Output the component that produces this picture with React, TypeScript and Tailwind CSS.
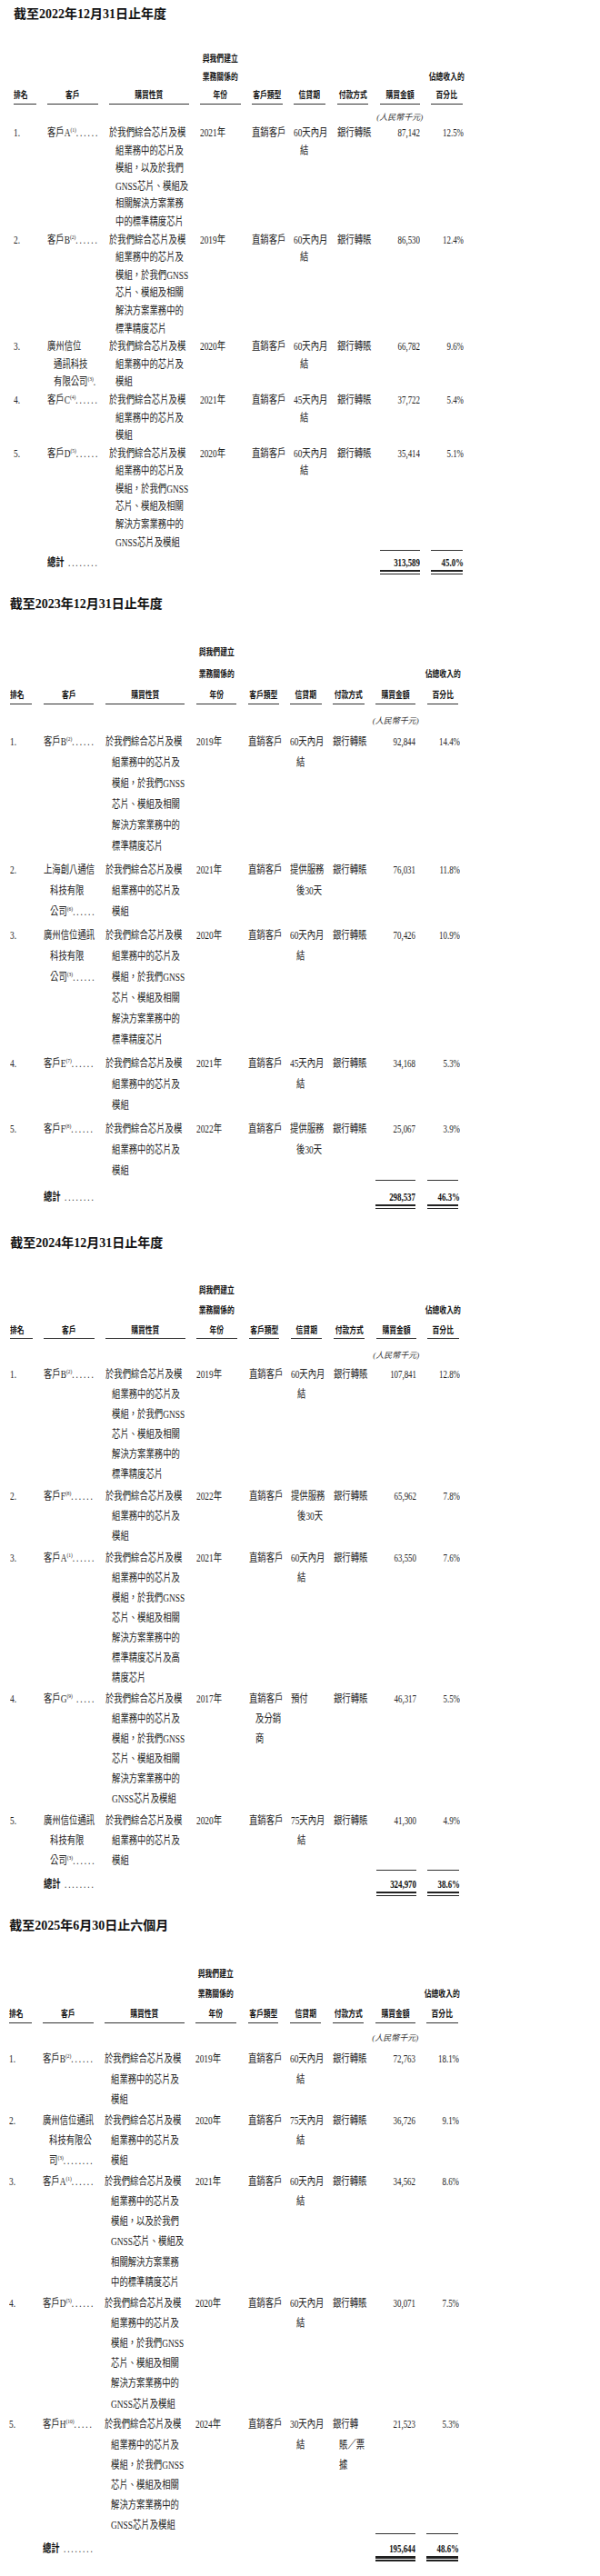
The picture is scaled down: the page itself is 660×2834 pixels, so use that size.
import React from "react";

type Cust = { lines: string[]; note: string; dots: string };
type Row = {
  rank: string;
  cust: Cust;
  nature: string[];
  year: string;
  type: string[];
  credit: string[];
  pay: string[];
  amt: string;
  pct: string;
};

type Cfg = {
  title: string;
  rows: Row[];
  amt: string;
  pct: string;
  wrap: string;
  headerMt: string;
  hLead: string;
  hUnder: string;
  unitsMt: string;
  rowsMt: string;
  lead: string;
  rowGap: string;
  totalMt: string;
  totalPt: string;
};

const GRID =
  "grid grid-cols-[24.5px_55.5px_87.5px_44.5px_33.5px_34.5px_34.5px_44px_34.5px] gap-x-[12.6px]";
const SL = "origin-left scale-x-[0.78]";
const SR = "origin-right scale-x-[0.74]";

const N_A = ["於我們綜合芯片及模", "組業務中的芯片及", "模組，以及於我們", "GNSS芯片、模組及", "相關解決方案業務", "中的標準精度芯片"];
const N_B = ["於我們綜合芯片及模", "組業務中的芯片及", "模組，於我們GNSS", "芯片、模組及相關", "解決方案業務中的", "標準精度芯片"];
const N_S = ["於我們綜合芯片及模", "組業務中的芯片及", "模組"];
const N_D = ["於我們綜合芯片及模", "組業務中的芯片及", "模組，於我們GNSS", "芯片、模組及相關", "解決方案業務中的", "GNSS芯片及模組"];
const N_A24 = ["於我們綜合芯片及模", "組業務中的芯片及", "模組，於我們GNSS", "芯片、模組及相關", "解決方案業務中的", "標準精度芯片及高", "精度芯片"];

const DC = ["直銷客戶"];
const C60 = ["60天內月", "結"];
const C45 = ["45天內月", "結"];
const C75 = ["75天內月", "結"];
const C30 = ["30天內月", "結"];
const CSV = ["提供服務", "後30天"];
const BANK = ["銀行轉賬"];

const cust = (lines: string[], note: string, dots = "......"): Cust => ({ lines, note, dots });

const S1: Row[] = [
  { rank: "1.", cust: cust(["客戶A"], "1"), nature: N_A, year: "2021年", type: DC, credit: C60, pay: BANK, amt: "87,142", pct: "12.5%" },
  { rank: "2.", cust: cust(["客戶B"], "2"), nature: N_B, year: "2019年", type: DC, credit: C60, pay: BANK, amt: "86,530", pct: "12.4%" },
  { rank: "3.", cust: cust(["廣州信位", "通訊科技", "有限公司"], "3", "."), nature: N_S, year: "2020年", type: DC, credit: C60, pay: BANK, amt: "66,782", pct: "9.6%" },
  { rank: "4.", cust: cust(["客戶C"], "4"), nature: N_S, year: "2021年", type: DC, credit: C45, pay: BANK, amt: "37,722", pct: "5.4%" },
  { rank: "5.", cust: cust(["客戶D"], "5"), nature: N_D, year: "2020年", type: DC, credit: C60, pay: BANK, amt: "35,414", pct: "5.1%" },
];

const S2: Row[] = [
  { rank: "1.", cust: cust(["客戶B"], "2"), nature: N_B, year: "2019年", type: DC, credit: C60, pay: BANK, amt: "92,844", pct: "14.4%" },
  { rank: "2.", cust: cust(["上海創八通信", "科技有限", "公司"], "6"), nature: N_S, year: "2021年", type: DC, credit: CSV, pay: BANK, amt: "76,031", pct: "11.8%" },
  { rank: "3.", cust: cust(["廣州信位通訊", "科技有限", "公司"], "3"), nature: N_B, year: "2020年", type: DC, credit: C60, pay: BANK, amt: "70,426", pct: "10.9%" },
  { rank: "4.", cust: cust(["客戶E"], "7"), nature: N_S, year: "2021年", type: DC, credit: C45, pay: BANK, amt: "34,168", pct: "5.3%" },
  { rank: "5.", cust: cust(["客戶F"], "8"), nature: N_S, year: "2022年", type: DC, credit: CSV, pay: BANK, amt: "25,067", pct: "3.9%" },
];

const S3: Row[] = [
  { rank: "1.", cust: cust(["客戶B"], "2"), nature: N_B, year: "2019年", type: DC, credit: C60, pay: BANK, amt: "107,841", pct: "12.8%" },
  { rank: "2.", cust: cust(["客戶F"], "8"), nature: N_S, year: "2022年", type: DC, credit: CSV, pay: BANK, amt: "65,962", pct: "7.8%" },
  { rank: "3.", cust: cust(["客戶A"], "1"), nature: N_A24, year: "2021年", type: DC, credit: C60, pay: BANK, amt: "63,550", pct: "7.6%" },
  { rank: "4.", cust: cust(["客戶G"], "9", " ....."), nature: N_D, year: "2017年", type: ["直銷客戶", "及分銷", "商"], credit: ["預付"], pay: BANK, amt: "46,317", pct: "5.5%" },
  { rank: "5.", cust: cust(["廣州信位通訊", "科技有限", "公司"], "3"), nature: N_S, year: "2020年", type: DC, credit: C75, pay: BANK, amt: "41,300", pct: "4.9%" },
];

const S4: Row[] = [
  { rank: "1.", cust: cust(["客戶B"], "2"), nature: N_S, year: "2019年", type: DC, credit: C60, pay: BANK, amt: "72,763", pct: "18.1%" },
  { rank: "2.", cust: cust(["廣州信位通訊", "科技有限公", "司"], "3", "........"), nature: N_S, year: "2020年", type: DC, credit: C75, pay: BANK, amt: "36,726", pct: "9.1%" },
  { rank: "3.", cust: cust(["客戶A"], "1"), nature: N_A, year: "2021年", type: DC, credit: C60, pay: BANK, amt: "34,562", pct: "8.6%" },
  { rank: "4.", cust: cust(["客戶D"], "5"), nature: N_D, year: "2020年", type: DC, credit: C60, pay: BANK, amt: "30,071", pct: "7.5%" },
  { rank: "5.", cust: cust(["客戶H"], "10", "....."), nature: N_D, year: "2024年", type: DC, credit: C30, pay: ["銀行轉", "賬／票", "據"], amt: "21,523", pct: "5.3%" },
];

const HEADERS: string[][] = [
  ["排名"],
  ["客戶"],
  ["購買性質"],
  ["與我們建立", "業務關係的", "年份"],
  ["客戶類型"],
  ["信貸期"],
  ["付款方式"],
  ["購買金額"],
  ["佔總收入的", "百分比"],
];

function Lines({ lines }: { lines: string[] }) {
  return (
    <div className={SL}>
      {lines.map((l, i) => (
        <div key={i} className={i > 0 ? "whitespace-nowrap pl-[9px]" : "whitespace-nowrap"}>
          {l}
        </div>
      ))}
    </div>
  );
}

function CustCell({ c }: { c: Cust }) {
  const last = c.lines.length - 1;
  return (
    <div className={SL}>
      {c.lines.map((l, i) => (
        <div key={i} className={i > 0 ? "whitespace-nowrap pl-[9px]" : "whitespace-nowrap"}>
          {l}
          {i === last && (
            <>
              <sup className="text-[7px] -top-[5px]">({c.note})</sup>
              <span className="whitespace-pre tracking-[2.4px]">{c.dots}</span>
            </>
          )}
        </div>
      ))}
    </div>
  );
}

function Section({ cfg }: { cfg: Cfg }) {
  return (
    <div className={cfg.wrap}>
      <div className="whitespace-nowrap text-[14px] font-bold leading-[20px] text-[#111]">{cfg.title}</div>

      <div className={`${GRID} items-end ${cfg.headerMt} text-[10px] font-bold text-[#111] ${cfg.hLead}`}>
        {HEADERS.map((h, i) => (
          <div key={i} className="flex flex-col">
            <div
              className={
                i === 0
                  ? "flex origin-left scale-x-[0.78] flex-col items-start"
                  : "flex scale-x-[0.78] flex-col items-center"
              }
            >
              {h.map((t, j) => (
                <div key={j} className="whitespace-nowrap">
                  {t}
                </div>
              ))}
            </div>
            <div className={`h-px bg-[#333] ${cfg.hUnder}`} />
          </div>
        ))}
      </div>

      <div className={`${GRID} ${cfg.unitsMt} leading-[16px]`}>
        <div className="col-start-8 flex justify-center whitespace-nowrap text-[9px] italic text-[#333]">(人民幣千元)</div>
      </div>

      <div className={`flex flex-col ${cfg.rowsMt} ${cfg.rowGap} ${cfg.lead} text-[12px] text-[#222]`}>
        {cfg.rows.map((r, i) => (
          <div key={i} className={`${GRID} items-start`}>
            <div className={SL}>{r.rank}</div>
            <CustCell c={r.cust} />
            <Lines lines={r.nature} />
            <div className={`whitespace-nowrap ${SL}`}>{r.year}</div>
            <Lines lines={r.type} />
            <Lines lines={r.credit} />
            <Lines lines={r.pay} />
            <div className={`text-right whitespace-nowrap ${SR}`}>{r.amt}</div>
            <div className={`-mr-[1.5px] text-right whitespace-nowrap ${SR}`}>{r.pct}</div>
          </div>
        ))}
      </div>

      <div className={`flex flex-col ${cfg.totalMt}`}>
        <div className={GRID}>
          <div className="col-start-8 h-px bg-[#333]" />
          <div className="h-px bg-[#333]" />
        </div>
        <div className={`${GRID} ${cfg.totalPt} text-[12px] font-bold leading-[16px] text-[#111]`}>
          <div className={`col-start-2 whitespace-nowrap ${SL}`}>
            總計<span className="whitespace-pre font-normal tracking-[2.4px] text-[#333]"> ........</span>
          </div>
          <div className={`col-start-8 text-right whitespace-nowrap ${SR}`}>{cfg.amt}</div>
          <div className={`-mr-[1.5px] text-right whitespace-nowrap ${SR}`}>{cfg.pct}</div>
        </div>
        <div className={GRID}>
          <div className="col-start-8 h-[2.5px] bg-[#222]" />
          <div className="h-[2.5px] bg-[#222]" />
        </div>
        <div className={`${GRID} mt-[1.5px]`}>
          <div className="col-start-8 h-[1.5px] bg-[#222]" />
          <div className="h-[1.5px] bg-[#222]" />
        </div>
      </div>
    </div>
  );
}

const CFGS: Cfg[] = [
  {
    title: "截至2022年12月31日止年度",
    rows: S1,
    amt: "313,589",
    pct: "45.0%",
    wrap: "pl-[15px] pt-[6px]",
    headerMt: "mt-[29px]",
    hLead: "leading-[20px]",
    hUnder: "-mt-[1px]",
    unitsMt: "mt-[6px]",
    rowsMt: "mt-0",
    lead: "leading-[19.6px]",
    rowGap: "gap-y-0",
    totalMt: "-mt-[2px]",
    totalPt: "pt-[4.4px]",
  },
  {
    title: "截至2023年12月31日止年度",
    rows: S2,
    amt: "298,537",
    pct: "46.3%",
    wrap: "pl-[10.7px] mt-[22.4px]",
    headerMt: "mt-[31.7px]",
    hLead: "leading-[23.3px]",
    hUnder: "-mt-[2.6px]",
    unitsMt: "mt-[10.3px]",
    rowsMt: "mt-[3.8px]",
    lead: "leading-[23px]",
    rowGap: "gap-y-[3px]",
    totalMt: "-mt-[1.8px]",
    totalPt: "pt-[9.7px]",
  },
  {
    title: "截至2024年12月31日止年度",
    rows: S3,
    amt: "324,970",
    pct: "38.6%",
    wrap: "pl-[11.2px] mt-[28.1px]",
    headerMt: "mt-[30.5px]",
    hLead: "leading-[22.3px]",
    hUnder: "-mt-[3px]",
    unitsMt: "mt-[9.3px]",
    rowsMt: "mt-[2.7px]",
    lead: "leading-[22px]",
    rowGap: "gap-y-[1.6px]",
    totalMt: "-mt-[0.8px]",
    totalPt: "pt-[6.7px]",
  },
  {
    title: "截至2025年6月30日止六個月",
    rows: S4,
    amt: "195,644",
    pct: "48.6%",
    wrap: "pl-[10.2px] mt-[23.2px]",
    headerMt: "mt-[31.75px]",
    hLead: "leading-[21.7px]",
    hUnder: "-mt-[0.85px]",
    unitsMt: "mt-[7.6px]",
    rowsMt: "mt-[4.3px]",
    lead: "leading-[22.2px]",
    rowGap: "gap-y-[0.6px]",
    totalMt: "-mt-[2.1px]",
    totalPt: "pt-[7.6px]",
  },
];

export default function App() {
  return (
    <div className="min-h-[2834px] w-[660px] bg-white pb-[16px] font-['Liberation_Serif','Noto_Sans_CJK_TC',serif]">
      {CFGS.map((c, i) => (
        <Section key={i} cfg={c} />
      ))}
    </div>
  );
}
